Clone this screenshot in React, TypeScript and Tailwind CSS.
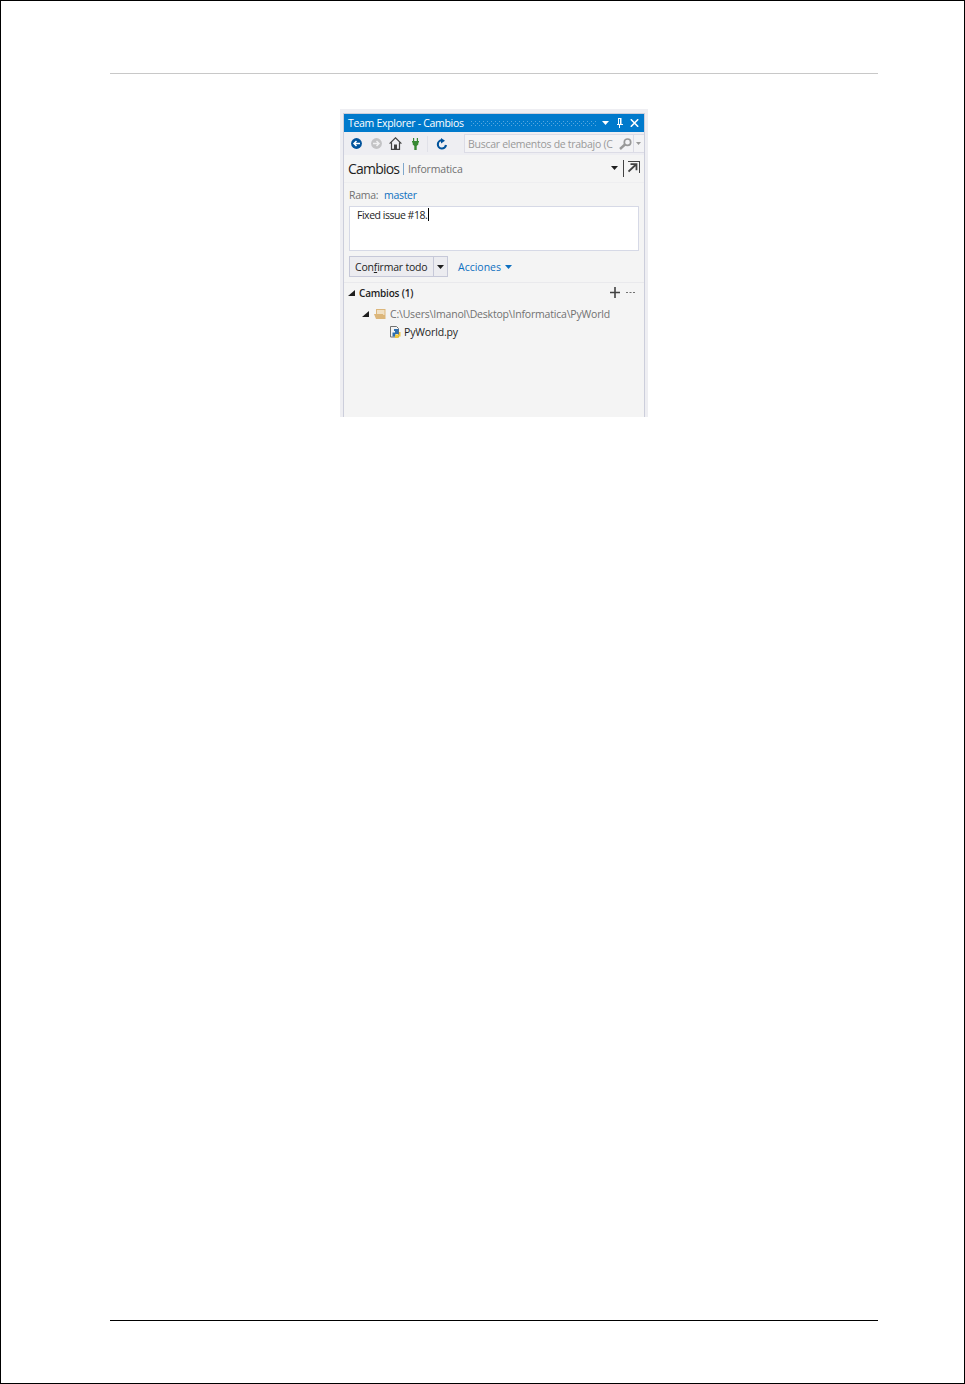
import { useState } from 'react';

const font = "font-['Open_Sans','Noto_Sans',sans-serif]";

function Caret({ className }: { className?: string }) {
  return (
    <svg width="7" height="4" viewBox="0 0 7 4" className={className} fill="currentColor">
      <path d="M0 0h7L3.5 4z" />
    </svg>
  );
}

function TreeArrow({ className }: { className?: string }) {
  return (
    <svg width="7" height="6" viewBox="0 0 7 6" className={className} fill="#1e1e1e">
      <path d="M7 0v6H0z" />
    </svg>
  );
}

function TitleBar() {
  return (
    <div className="flex h-[18px] items-center bg-[#007acc] pl-1 text-white">
      <span className="w-[122px] text-[10.5px] leading-[18px] tracking-[-0.3px] whitespace-nowrap">
        Team Explorer - Cambios
      </span>
      <svg width="126" height="5" className="shrink-0">
        <defs>
          <pattern id="grip" width="4" height="4" patternUnits="userSpaceOnUse">
            <rect x="1" y="0" width="1" height="1" fill="#59a8de" />
            <rect x="3" y="2" width="1" height="1" fill="#59a8de" />
          </pattern>
        </defs>
        <rect width="126" height="5" fill="url(#grip)" />
      </svg>
      <Caret className="ml-[6px]" />
      <svg width="7" height="10" viewBox="0 0 7 10" className="ml-[7px]" fill="none" stroke="white">
        <path d="M2 0.5h3M2.5 0v6M4.5 0v6M5 0v6M1 6.5h6M3.5 6v4" />
      </svg>
      <svg width="9" height="8" viewBox="0 0 9 8" className="ml-[7px]" fill="none" stroke="white" strokeWidth="1.6">
        <path d="M0.8 0.3l7.4 7.4M8.2 0.3L0.8 7.7" />
      </svg>
    </div>
  );
}

function Toolbar() {
  return (
    <div className="flex h-[23px] items-center bg-[#eeeef2] pl-[7px]">
      <svg width="11" height="11" viewBox="0 0 11 11">
        <circle cx="5.5" cy="5.5" r="5.4" fill="#00539c" />
        <path d="M9 5.5H3M5.5 3L3 5.5 5.5 8" fill="none" stroke="white" strokeWidth="1.5" />
      </svg>
      <svg width="11" height="11" viewBox="0 0 11 11" className="ml-[9px]">
        <circle cx="5.5" cy="5.5" r="5.4" fill="#c3c3c5" />
        <path d="M2 5.5h6M5.5 3L8 5.5 5.5 8" fill="none" stroke="#f0f0f2" strokeWidth="1.5" />
      </svg>
      <svg width="13" height="13" viewBox="0 0 13 13" className="ml-[7px]" fill="none" stroke="#424242">
        <path d="M0.6 6.6L6.5 0.8l5.9 5.8M2.5 5.5v6.8h8V5.5" strokeWidth="1.2" />
        <path d="M5 7.5h3V13H5z" fill="#424242" stroke="none" />
      </svg>
      <svg width="7" height="12" viewBox="0 0 7 12" className="ml-[10px]" fill="#388a34">
        <path d="M1 0h1.2v3H1zM4.8 0H6v3H4.8zM0 3h7v1.5H6.3V6.5L4.7 8v4H2.3V8L0.7 6.5V4.5H0z" />
      </svg>
      <span className="ml-[8px] h-4 w-px bg-[#e0e1e8]" />
      <svg width="12" height="12" viewBox="0 0 12 12" className="ml-[8px]">
        <path d="M6 2.3A4.1 4.1 0 1 0 10 7" fill="none" stroke="#00539c" strokeWidth="2.1" />
        <path d="M5 0l4 2.8L5 5.5z" fill="#00539c" />
      </svg>
      <div className="ml-auto flex h-[19px] w-[180px] items-center border border-r-0 border-[#dcdce6] bg-[#f3f3f5] pl-[3px] text-[#999999]">
        <span className="w-[147px] shrink-0 text-[10.5px] leading-4 tracking-[-0.28px] whitespace-nowrap">
          Buscar elementos de trabajo (C
        </span>
        <svg width="13" height="12" viewBox="0 0 13 12" className="ml-[4px] shrink-0" fill="none" stroke="#999999">
          <circle cx="8.5" cy="4.2" r="3.2" strokeWidth="1.7" />
          <path d="M6 6.5L1 11" strokeWidth="2.4" />
        </svg>
        <span className="ml-px h-full w-px bg-[#dcdce6]" />
        <svg width="5" height="3" viewBox="0 0 5 3" className="ml-[2px]" fill="#999999">
          <path d="M0 0h5L2.5 3z" />
        </svg>
      </div>
    </div>
  );
}

function Header() {
  return (
    <div className="flex h-[28px] items-center border-b border-[#eeeef0] pl-1">
      <span className="w-[55px] text-[14px] leading-5 tracking-[-0.8px] whitespace-nowrap text-[#1e1e1e]">
        Cambios
      </span>
      <span className="mt-px h-[12px] w-px bg-[#7fa8cc]" />
      <span className="mt-px ml-[4px] text-[10.5px] leading-5 tracking-[-0.15px] text-[#717171]">Informatica</span>
      <Caret className="mb-[2px] ml-auto text-[#1e1e1e]" />
      <span className="ml-[5px] h-[17px] w-px bg-[#424242]" />
      <svg width="12" height="12" viewBox="0 0 12 12" className="mr-[4px] mb-[3px] ml-[4px]" fill="none" stroke="#424242">
        <path d="M0 0.5h12M11.5 0v12" />
        <path d="M0.5 10.5L8 3.5M2.5 3.2h6v6" strokeWidth="1.8" />
      </svg>
    </div>
  );
}

export default function App() {
  const [message, setMessage] = useState('Fixed issue #18.');

  return (
    <div className={`flex h-[1384px] w-[965px] flex-col border border-black bg-white ${font}`}>
      <div className="mt-[72px] ml-[109px] h-px w-[768px] bg-[#c8c8c8]" />

      <div className="mt-[35px] ml-[339px] h-[308px] w-[308px] bg-[#eeeef2] px-[3px] pt-1">
        <div className="flex h-[304px] flex-col border border-b-0 border-[#cccedb] bg-[#f4f4f4]">
          <TitleBar />
          <Toolbar />
          <Header />

          {/* Rama */}
          <div className="flex h-[23px] items-center pl-[5px] text-[10.5px] leading-4 tracking-[-0.3px]">
            <span className="w-[35px] text-[#717171]">Rama:</span>
            <span className="text-[#0e70c0]">master</span>
          </div>

          {/* Mensaje */}
          <div className="mx-[5px] flex h-[45px] items-start border border-[#d6d9e6] bg-white pl-[7px]">
            <input
              value={message}
              onChange={(e) => setMessage(e.target.value)}
              className="h-4 w-[71px] text-[10.5px] tracking-[-0.48px] text-[#1e1e1e] outline-none"
            />
            <span className="mt-px h-[13px] w-px bg-black" />
          </div>

          <div className="mt-[5px] ml-[5px] flex h-[21px] items-center text-[10.5px] leading-4">
            <button className="flex h-[21px] w-[99px] items-center border border-[#c6c8d8] bg-[#ececf0] text-[#1e1e1e]">
              <span className="w-[83px] pl-[5px] text-left tracking-[-0.2px] whitespace-nowrap">
                Con<u>f</u>irmar todo
              </span>
              <span className="h-full w-px bg-[#c6c8d8]" />
              <Caret className="ml-[3px]" />
            </button>
            <span className="ml-[10px] w-[47px] text-[#0e70c0]">Acciones</span>
            <Caret className="mt-px text-[#0e70c0]" />
          </div>

          {/* Cambios */}
          <div className="mt-[5px] flex h-[21px] items-center border-t border-[#e9e9ec] pl-1">
            <TreeArrow />
            <span className="ml-1 text-[10px] leading-4 font-semibold tracking-[-0.2px] text-[#1e1e1e]">Cambios (1)</span>
            <svg width="11" height="11" viewBox="0 0 11 11" className="mb-px ml-auto" stroke="#424242" strokeWidth="1.6">
              <path d="M5 0v11M0 5.5h10" />
            </svg>
            <svg width="9" height="1" className="mr-[9px] mb-px ml-[5px]" fill="#717171">
              <path d="M0 0h2v1H0zM3.5 0h2v1h-2zM7 0h2v1H7z" />
            </svg>
          </div>
          <div className="mt-[2px] flex h-[18px] items-center pl-[18px]">
            <TreeArrow />
            <svg width="12" height="10" viewBox="0 0 12 10" className="ml-[5px]">
              <path d="M2 0h9.5v10H2z" fill="#dcb67a" />
              <path d="M3 1h7.5v5H3z" fill="#f0e0c4" />
              <path d="M0 5h9l2 5H2z" fill="#dcb67a" />
            </svg>
            <span className="ml-[4px] text-[10.5px] leading-4 tracking-[-0.19px] whitespace-nowrap text-[#717171]">
              C:\Users\Imanol\Desktop\Informatica\PyWorld
            </span>
          </div>
          <div className="flex h-[18px] items-center pl-[46px]">
            <svg width="11" height="12" viewBox="0 0 11 12">
              <path d="M0.5 0.5h6l2 2v8.5h-8z" fill="#f4f4f4" stroke="#717171" />
              <path d="M4 3h4.5v5h-3v2.500h-3v-4H5V5H4z" fill="#2f6fae" />
              <path d="M10.500 6v4.500H8.500V12H5V8.500h4V6z" fill="#f0c63c" />
            </svg>
            <span className="ml-[3px] text-[10.5px] leading-4 tracking-[-0.15px] text-[#1e1e1e]">PyWorld.py</span>
          </div>
        </div>
      </div>

      <div className="mt-auto mb-[62px] ml-[109px] h-px w-[768px] bg-black" />
    </div>
  );
}
